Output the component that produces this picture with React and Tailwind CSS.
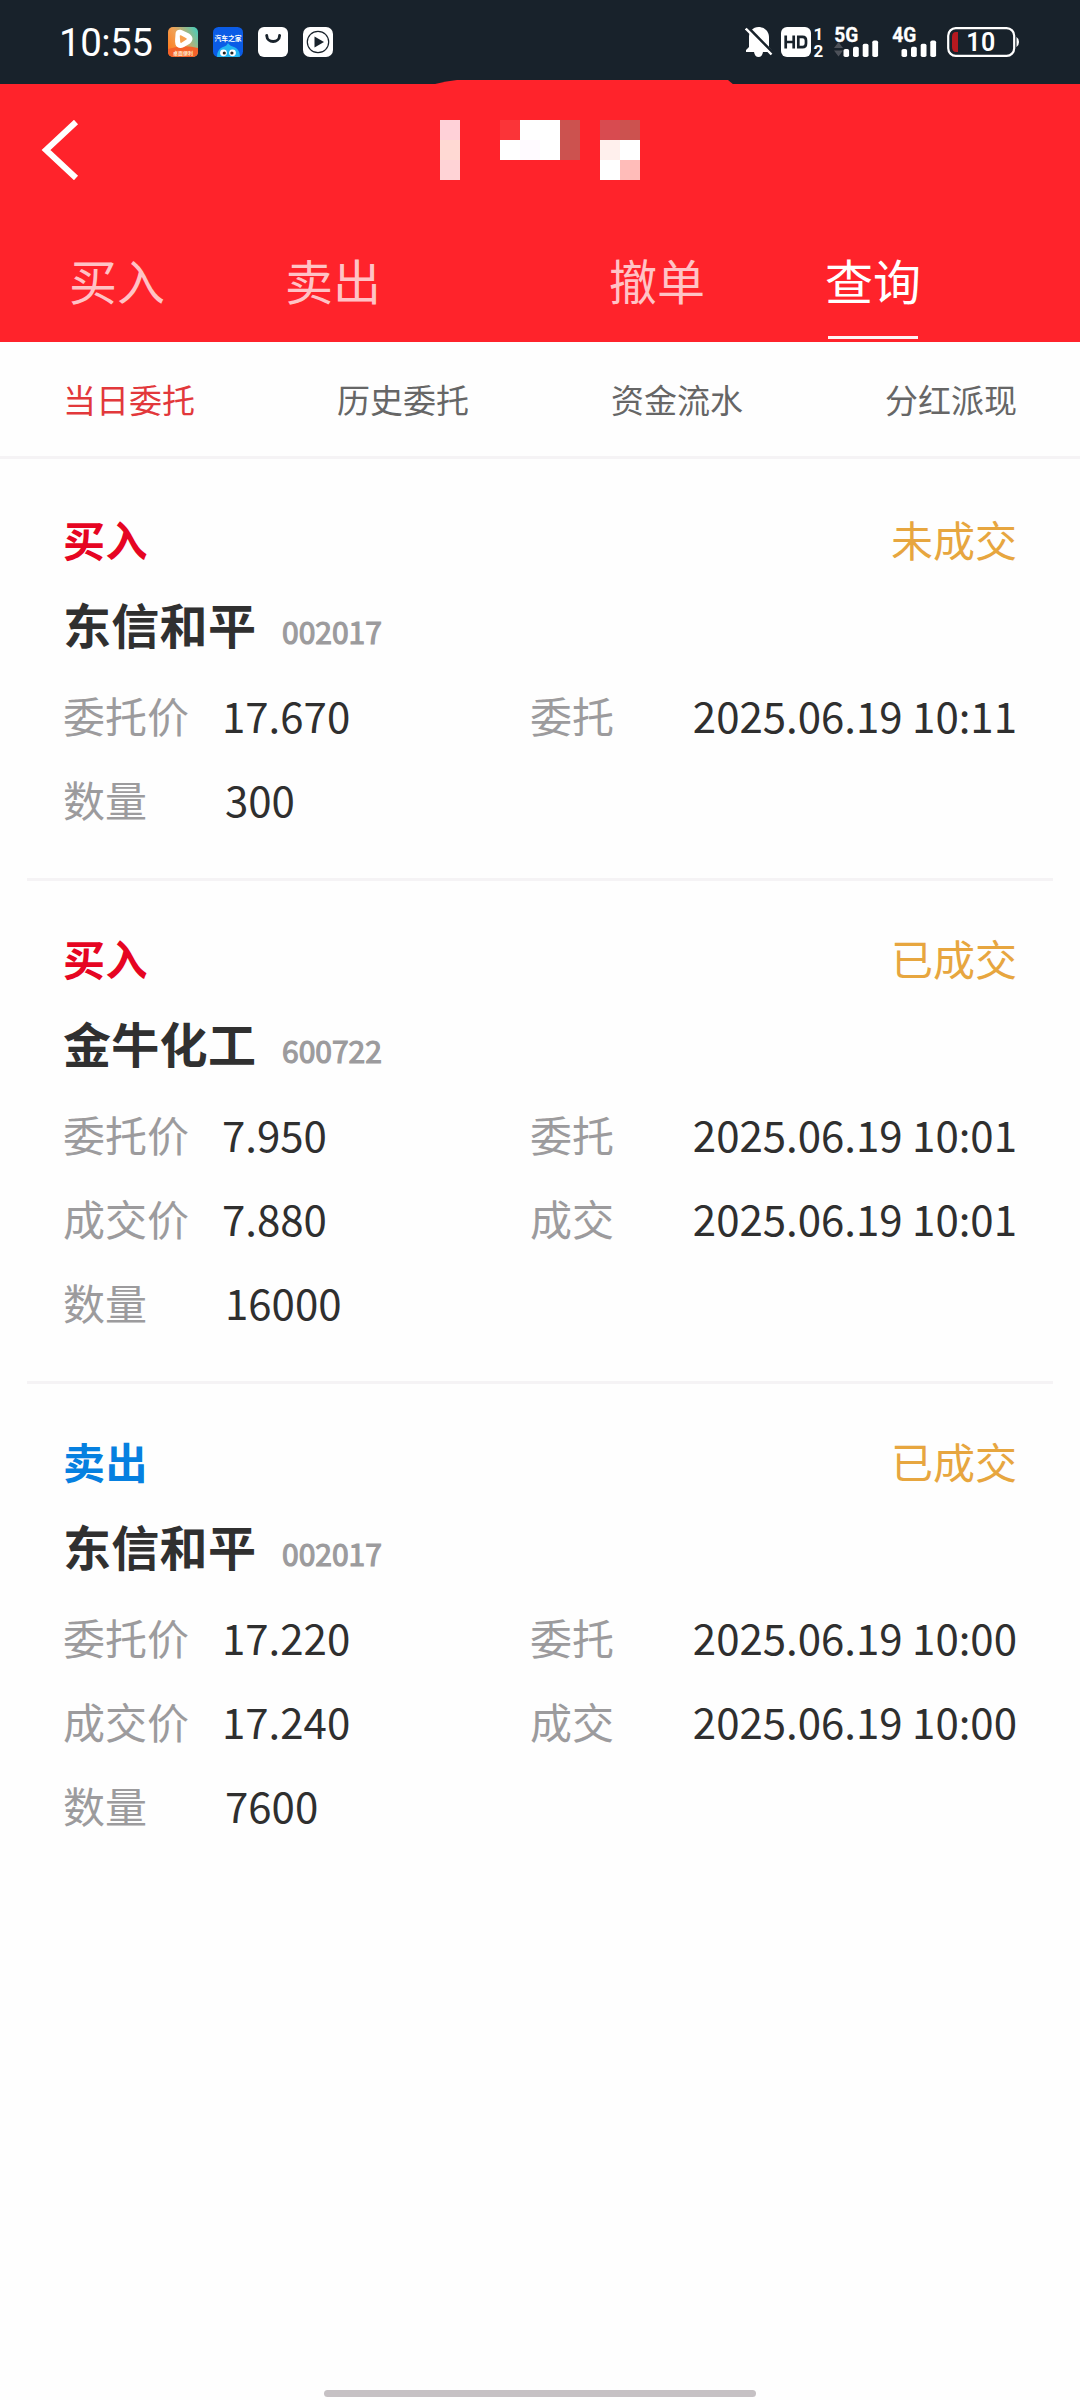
const orders = [
  {
    side: "买入", status: "未成交", name: "东信和平", code: "002017", qty: "300",
    rows: [["委托价", "17.670", "委托", "2025.06.19 10:11"]],
  },
  {
    side: "买入", status: "已成交", name: "金牛化工", code: "600722", qty: "16000",
    rows: [
      ["委托价", "7.950", "委托", "2025.06.19 10:01"],
      ["成交价", "7.880", "成交", "2025.06.19 10:01"],
    ],
  },
  {
    side: "卖出", status: "已成交", name: "东信和平", code: "002017", qty: "7600",
    rows: [
      ["委托价", "17.220", "委托", "2025.06.19 10:00"],
      ["成交价", "17.240", "成交", "2025.06.19 10:00"],
    ],
  },
];

const titleTiles = [
  ["bg-[#ffd1d8]", "", "", "bg-[#fb3438]", "bg-white", "bg-white", "bg-[#cc524f]", "", "bg-[#d84b50]", "bg-[#cc524f]"],
  ["bg-[#ffd9d3]", "", "", "bg-white", "bg-[#fffaff]", "bg-white", "bg-[#cc524f]", "", "bg-[#fff0ed]", "bg-white"],
  ["bg-[#ffd3d6]", "", "", "", "", "", "", "", "bg-white", "bg-[#ffbcb9]"],
];

function VideoAppIcon() {
  return (
    <svg width="30" height="30" viewBox="0 0 30 30">
      <defs>
        <linearGradient id="va" x1="0" y1="0.8" x2="1" y2="0.2">
          <stop offset="0" stopColor="#ff7a1c" />
          <stop offset="0.45" stopColor="#f0a155" />
          <stop offset="1" stopColor="#52cbb4" />
        </linearGradient>
        <clipPath id="vc"><rect width="30" height="30" rx="5" /></clipPath>
      </defs>
      <g clipPath="url(#vc)">
        <rect width="30" height="30" fill="url(#va)" />
        <path d="M0 22Q15 17 30 21V30H0Z" fill="#f4622a" />
        <path d="M7.500 7C7.500 3.500 10.500 2 14 3.200L21 6.500C25.500 9.500 25.500 13.500 22 16.500L16 20C12 22 8.500 20.500 7.500 17.500C6.500 14 7.500 10 7.500 7Z" fill="#fff" />
        <path d="M12.500 9L18 11.800L13 15.200Z" fill="#f7a04f" stroke="#f7a04f" strokeWidth="1.500" strokeLinejoin="round" />
        <text x="15" y="28" fontSize="5" fontWeight="700" fill="#ffe9c9" textAnchor="middle" fontFamily="Noto Sans CJK SC, sans-serif">桌面便利</text>
      </g>
    </svg>
  );
}

function CarAppIcon() {
  return (
    <svg width="30" height="30" viewBox="0 0 30 30">
      <defs><clipPath id="cc"><rect width="30" height="30" rx="5.500" /></clipPath></defs>
      <g clipPath="url(#cc)">
        <rect width="30" height="30" fill="#0b5ce6" />
        <path d="M4 30C4 24 7 21 10 20C13 19 14 18 15 16C16 18 18 19 21 20C24 21 27 24 27 30Z" fill="#21b4f2" />
        <text x="15" y="14" fontSize="6.800" fontWeight="700" fill="#fff" textAnchor="middle" fontFamily="Noto Sans CJK SC, sans-serif">汽车之家</text>
        <circle cx="10.500" cy="25.800" r="3.400" fill="#fff" />
        <circle cx="19.500" cy="25.800" r="3.400" fill="#fff" />
        <circle cx="11.300" cy="26" r="1.600" fill="#222" />
        <circle cx="18.900" cy="26" r="1.600" fill="#222" />
      </g>
    </svg>
  );
}

function StoreIcon() {
  return (
    <svg width="30" height="30" viewBox="0 0 30 30">
      <rect width="30" height="30" rx="6" fill="#fff" />
      <path d="M8.700 8.500C9 16.500 21.300 16.500 21.600 8.500" fill="none" stroke="#18222b" strokeWidth="2.900" strokeLinecap="round" />
    </svg>
  );
}

function PlayIcon() {
  return (
    <svg width="30" height="30" viewBox="0 0 30 30">
      <rect width="30" height="30" rx="7" fill="#fff" />
      <circle cx="15" cy="15" r="10.700" fill="none" stroke="#18222b" strokeWidth="1.200" />
      <path d="M11.500 9.500V20.500L21 15Z" fill="#18222b" />
    </svg>
  );
}

function MutedBell() {
  return (
    <svg width="28" height="30" viewBox="0 0 28 30">
      <path d="M13.500 0C19.500 0 24 4.500 24 10V20L27 23.500V25H18C17.500 28 16 30 13.500 30S9.500 28 9 25H1V23L4 20V10C4 4.500 8 0 13.500 0Z" fill="#fff" />
      <path d="M2.500 0L29 27" stroke="#18222b" strokeWidth="3" />
      <path d="M0.800 1.500L26.500 27.500" stroke="#fff" strokeWidth="2.400" />
    </svg>
  );
}

function HdIcon() {
  return (
    <svg className="overflow-visible" width="44" height="30" viewBox="0 0 44 30">
      <rect width="30" height="30" rx="6" fill="#fff" />
      <path d="M4.700 8.500V21.500M12.700 8.500V21.500M4.700 15H12.700M17.300 9.800V20.200H21.500Q25 20.200 25 16.500V13.500Q25 9.800 21.500 9.800Z" fill="none" stroke="#18222b" strokeWidth="2.700" />
      <text x="37.500" y="12.500" fontSize="17" fontWeight="700" fill="#fff" textAnchor="middle" fontFamily="Roboto, sans-serif">1</text>
      <text x="37.300" y="29.800" fontSize="17" fontWeight="700" fill="#fff" textAnchor="middle" fontFamily="Roboto, sans-serif">2</text>
    </svg>
  );
}

function Signal({ label, arrows }) {
  return (
    <svg className="overflow-visible" width="46" height="30" viewBox="0 0 46 30">
      <text x="0.300" y="15" fontSize="20.500" fontWeight="700" fill="#fff" stroke="#fff" strokeWidth="0.300" textLength="24" lengthAdjust="spacingAndGlyphs" fontFamily="Roboto, sans-serif">{label}</text>
      {arrows && <path d="M0 21L4.500 15L9 21ZM0 23.500H9L4.500 29.500Z" fill="#4c5159" />}
      <g fill="#fff">
        <rect x="9.500" y="22" width="5.600" height="8" rx="1.800" />
        <rect x="19" y="19.700" width="5.800" height="10.300" rx="1.800" />
        <rect x="28.700" y="16.800" width="5.800" height="13.200" rx="1.800" />
        <rect x="38.300" y="13.500" width="5.800" height="16.500" rx="1.800" />
      </g>
    </svg>
  );
}

function Battery() {
  return (
    <svg width="72" height="30" viewBox="0 0 72 30">
      <rect x="1.200" y="1.200" width="66" height="27.600" rx="7.500" fill="none" stroke="#fff" strokeWidth="2.200" />
      <path d="M11 5V25H9Q5 25 5 20V10Q5 5 9 5Z" fill="#b5191f" />
      <path d="M69.500 10Q72 11.500 72 15T69.500 20Z" fill="#fff" />
      <text x="34" y="24" fontSize="25" fontWeight="600" letterSpacing="0.400" fill="#fff" textAnchor="middle" fontFamily="Roboto, sans-serif">10</text>
    </svg>
  );
}

function StatusBar() {
  return (
    <div className="flex h-[84px] items-start bg-[#18222b] pl-[59px]">
      <div className="mt-[21px] w-[109px] font-['Roboto'] text-[38.5px] leading-[43px] tracking-[-0.5px] text-white">10:55</div>
      <div className="mt-[27px] flex gap-[15px]">
        <VideoAppIcon />
        <CarAppIcon />
        <StoreIcon />
        <PlayIcon />
      </div>
      <div className="mt-[27px] ml-[412px] flex">
        <MutedBell />
        <div className="ml-2"><HdIcon /></div>
        <div className="ml-[9px]"><Signal label="5G" arrows /></div>
        <div className="ml-[12px]"><Signal label="4G" /></div>
        <div className="ml-[9px]"><Battery /></div>
      </div>
    </div>
  );
}

function Header() {
  return (
    <header className="relative h-[258px] bg-[#ff232b]">
      <svg className="absolute -top-1 left-[435px]" width="299" height="5" viewBox="0 0 299 5">
        <path d="M0 4Q12 0.800 22 0H293L299 5H0Z" fill="#ff232b" />
      </svg>
      <div className="flex h-[132px] items-start pt-9">
        <svg className="ml-[41px]" width="38" height="60" viewBox="0 0 38 60">
          <path d="M35 2L5 30L35 58" fill="none" stroke="#fff" strokeWidth="6" />
        </svg>
        <div className="ml-[361px] grid grid-cols-[repeat(10,20px)]">
          {titleTiles.flat().map((c, i) => <div key={i} className={`h-5 ${c}`} />)}
        </div>
      </div>
      <nav className="flex h-[126px] pl-[69px] text-[48px] leading-[126px] text-[#ffc3c6]">
        <span>买入</span>
        <span className="ml-[120px]">卖出</span>
        <span className="ml-[228px]">撤单</span>
        <span className="relative ml-[120px] text-white">
          查询
          <span className="absolute bottom-[3px] left-[3px] h-[3px] w-[90px] bg-[#fff4f4]" />
        </span>
      </nav>
    </header>
  );
}

function Order({ o }) {
  return (
    <article className="mx-[27px] border-b-[3px] border-[#f5f3f5] pr-9 pb-[37px] pl-9 pt-[35px] last:border-transparent">
      <div className="flex justify-between leading-[84px]">
        <span className={o.side === "买入" ? "font-bold tracking-[0.5px] text-[#e60522]" : "font-bold tracking-[0.5px] text-[#0680e0]"}>{o.side}</span>
        <span className="text-[#e7a63f]">{o.status}</span>
      </div>
      <div className="mb-1.5 flex h-[86px] items-baseline leading-[84px]">
        <span className="w-[219px] text-[48px] font-bold tracking-[0.3px] text-[#303030]">{o.name}</span>
        <span className="text-[30px] text-[#9c9b9d] [-webkit-text-stroke:1.2px_#9c9b9d]">{o.code}</span>
      </div>
      {o.rows.map(([a, b, c, d]) => (
        <div key={a} className="flex h-[84px] leading-[84px] text-[#2f2f2f]">
          <span className="w-[159px] text-[#9c9b9d]">{a}</span>
          <span className="w-[308px]">{b}</span>
          <span className="text-[#9c9b9d]">{c}</span>
          <span className="ml-auto">{d}</span>
        </div>
      ))}
      <div className="flex h-[84px] leading-[84px] text-[#2f2f2f]">
        <span className="w-[162px] text-[#9c9b9d]">数量</span>
        <span>{o.qty}</span>
      </div>
    </article>
  );
}

export default function App() {
  return (
    <div className="flex h-[2400px] w-[1080px] flex-col overflow-hidden bg-[#fefefe] font-['Noto_Sans_CJK_SC',sans-serif] text-[42px]">
      <StatusBar />
      <Header />
      <nav className="flex h-[117px] justify-between border-b-[3px] border-[#f5f3f5] px-[63px] text-[33px] leading-[115px] text-[#666]">
        <span className="text-[#e2383b]">当日委托</span>
        <span>历史委托</span>
        <span>资金流水</span>
        <span>分红派现</span>
      </nav>
      <main className="flex-1 pt-[3px]">
        {orders.map((o, i) => <Order key={i} o={o} />)}
      </main>
      <div className="mb-[3px] h-[7px] w-[432px] self-center rounded-full bg-[#c6c1c4]" />
    </div>
  );
}
